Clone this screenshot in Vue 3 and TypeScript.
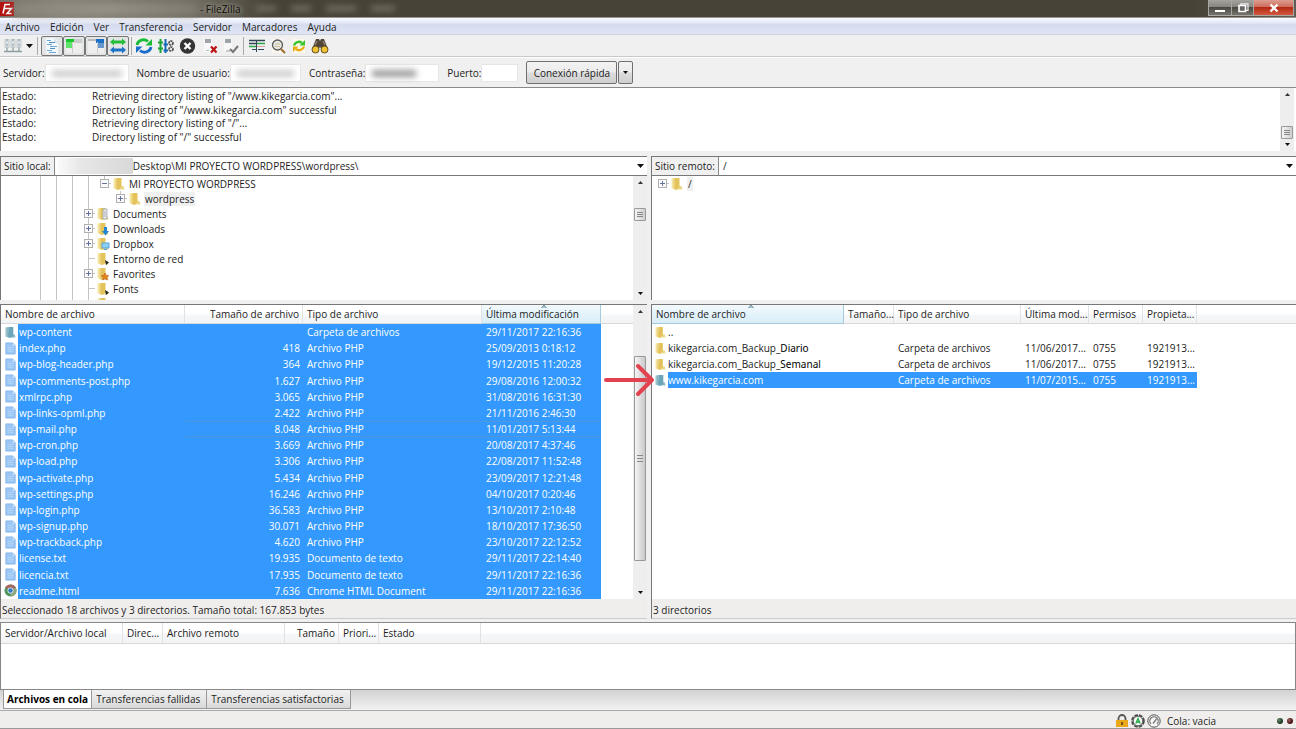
<script setup lang="ts">
import { ref } from 'vue'

type TreeCell = 'line' | 'gap' | 'plus' | 'minus' | 'branch'
interface TreeNode { label: string; cells: TreeCell[]; badge?: string; current?: boolean }
interface LocalFile { name: string; size: string; type: string; date: string; icon: string }

const menus = ['Archivo', 'Edición', 'Ver', 'Transferencia', 'Servidor', 'Marcadores', 'Ayuda']

const log = [
  'Retrieving directory listing of "/www.kikegarcia.com"...',
  'Directory listing of "/www.kikegarcia.com" successful',
  'Retrieving directory listing of "/"...',
  'Directory listing of "/" successful',
]

const tree: TreeNode[] = [
  { label: 'MI PROYECTO WORDPRESS', cells: ['line', 'line', 'line', 'line', 'minus'] },
  { label: 'wordpress', cells: ['line', 'line', 'line', 'line', 'gap', 'plus'], current: true },
  { label: 'Documents', cells: ['line', 'line', 'line', 'plus'], badge: 'doc' },
  { label: 'Downloads', cells: ['line', 'line', 'line', 'plus'], badge: 'down' },
  { label: 'Dropbox', cells: ['line', 'line', 'line', 'plus'], badge: 'box' },
  { label: 'Entorno de red', cells: ['line', 'line', 'line', 'branch'], badge: 'link' },
  { label: 'Favorites', cells: ['line', 'line', 'line', 'plus'], badge: 'star' },
  { label: 'Fonts', cells: ['line', 'line', 'line', 'branch'], badge: 'link' },
  { label: '', cells: ['line', 'line', 'line', 'line'] },
]

const php = 'Archivo PHP'
const txt = 'Documento de texto'
const f = (name: string, size: string, type: string, date: string, icon = 'file'): LocalFile => ({ name, size, type, date, icon })
const files: LocalFile[] = [
  f('wp-content', '', 'Carpeta de archivos', '29/11/2017 22:16:36', 'folder'),
  f('index.php', '418', php, '25/09/2013 0:18:12'),
  f('wp-blog-header.php', '364', php, '19/12/2015 11:20:28'),
  f('wp-comments-post.php', '1.627', php, '29/08/2016 12:00:32'),
  f('xmlrpc.php', '3.065', php, '31/08/2016 16:31:30'),
  f('wp-links-opml.php', '2.422', php, '21/11/2016 2:46:30'),
  f('wp-mail.php', '8.048', php, '11/01/2017 5:13:44'),
  f('wp-cron.php', '3.669', php, '20/08/2017 4:37:46'),
  f('wp-load.php', '3.306', php, '22/08/2017 11:52:48'),
  f('wp-activate.php', '5.434', php, '23/09/2017 12:21:48'),
  f('wp-settings.php', '16.246', php, '04/10/2017 0:20:46'),
  f('wp-login.php', '36.583', php, '13/10/2017 2:10:48'),
  f('wp-signup.php', '30.071', php, '18/10/2017 17:36:50'),
  f('wp-trackback.php', '4.620', php, '23/10/2017 22:12:52'),
  f('license.txt', '19.935', txt, '29/11/2017 22:14:40'),
  f('licencia.txt', '17.935', txt, '29/11/2017 22:16:36'),
  f('readme.html', '7.636', 'Chrome HTML Document', '29/11/2017 22:16:36', 'chrome'),
]

const remote = [
  { name: '..', tail: '', type: '', date: '', perm: '', owner: '' },
  { name: 'kikegarcia.com_Backup_', tail: 'Diario', type: 'Carpeta de archivos', date: '11/06/2017...', perm: '0755', owner: '1921913...' },
  { name: 'kikegarcia.com_Backup_', tail: 'Semanal', type: 'Carpeta de archivos', date: '11/06/2017...', perm: '0755', owner: '1921913...' },
  { name: 'www.kikegarcia.com', tail: '', type: 'Carpeta de archivos', date: '11/07/2015...', perm: '0755', owner: '1921913...' },
]
const selected = ref(3)

const tabs = ['Archivos en cola', 'Transferencias fallidas', 'Transferencias satisfactorias']
const activeTab = ref(0)
const localPath = ref('Desktop\\MI PROYECTO WORDPRESS\\wordpress\\')
const remotePath = ref('/')
</script>

<template>
  <svg class="defs" aria-hidden="true">
    <defs>
      <linearGradient id="gold" x1="0" x2="1"><stop offset="0" stop-color="#f9edb0" /><stop offset="1" stop-color="#dcb84a" /></linearGradient>
      <linearGradient id="teal" x1="0" x2="1"><stop offset="0" stop-color="#a9cbd0" /><stop offset="1" stop-color="#5c9db3" /></linearGradient>
    </defs>
    <symbol id="folder" viewBox="0 0 14 14">
      <path d="M5 9h6.500l1 3.500H5z" fill="#ecd88c" />
      <path d="M5 1h4.500v9l-2.500 2.500H4z" fill="#e3c35a" />
      <path d="M1.500 1.500L5 1v9l2 2.500-5.500-1z" fill="url(#gold)" />
    </symbol>
    <symbol id="folder-sel" viewBox="0 0 14 14">
      <path d="M5 9h6.500l1 3.500H5z" fill="#8dbbcb" />
      <path d="M5 1h5v10l-3 1.500H4z" fill="#6ba5ba" />
      <path d="M1.500 1.500L5 1v9l2 2.500-5.500-1z" fill="url(#teal)" />
    </symbol>
    <symbol id="file" viewBox="0 0 14 14">
      <path d="M2 1h7.500L12 3.500V13H2z" fill="#9cc7f5" stroke="#85b5ec" />
      <path d="M9.500 1v3H12z" fill="#d8eafc" />
      <path d="M4 6h6M4 8h6M4 10h6" stroke="#b5d5f7" />
    </symbol>
    <symbol id="chrome" viewBox="0 0 14 14">
      <circle cx="7" cy="7" r="6.500" fill="#51965e" />
      <path d="M7 7L1.400 3.700A6.500 6.500 0 0 1 12.600 3.700z" fill="#a9665f" />
      <path d="M7 7l5.600-3.300A6.500 6.500 0 0 1 7 13.500z" fill="#8fa681" />
      <circle cx="7" cy="7" r="3.200" fill="#e0effa" /><circle cx="7" cy="7" r="2.400" fill="#3479bd" />
    </symbol>
    <symbol id="up" viewBox="0 0 7 4"><path d="M0 4L3.500 0 7 4z" fill="#333" /></symbol>
    <symbol id="down" viewBox="0 0 7 4"><path d="M0 0h7L3.500 4z" fill="#111" /></symbol>
  </svg>

  <div class="window">
    <header class="titlebar">
      <svg class="logo" viewBox="0 0 14 14" aria-hidden="true">
        <rect width="14" height="14" fill="#b3130f" />
        <path d="M3 11.500L5 2.500h5M4 6.500h4M7 6.500h4.500L7 11.500h4.500" fill="none" stroke="#fff" stroke-width="1.500" />
      </svg>
      <span class="title-haze"></span>
      <h1>- FileZilla</h1>
      <span class="ghost g1"></span><span class="ghost g2"></span><span class="ghost g3"></span><span class="ghost g4"></span>
      <div class="win-buttons">
        <button type="button" class="min" aria-label="Minimizar"><svg viewBox="0 0 12 10"><path d="M1 7h10v2H1z" fill="#fff" /></svg></button>
        <button type="button" class="max" aria-label="Restaurar"><svg viewBox="0 0 12 10"><path d="M4 2V.800h7v6.500H9" fill="none" stroke="#eee" stroke-width="1.200" /><path d="M2 2.500h6.500v6H2z" fill="#666" stroke="#fff" stroke-width="1.600" /></svg></button>
        <button type="button" class="close" aria-label="Cerrar"><svg viewBox="0 0 12 10"><path d="M2.500 1.500l7 7m0-7l-7 7" stroke="#fff" stroke-width="2.300" /></svg></button>
      </div>
    </header>

    <nav class="menubar"><button v-for="m in menus" :key="m" type="button">{{ m }}</button></nav>

    <div class="toolbar" role="toolbar">
      <button type="button" class="wide" aria-label="Gestor de sitios">
        <svg width="18" height="16" viewBox="0 0 18 16"><path d="M1 1.500h4v8H1zM7 1.500h4v8H7zM13 1.500h4v8h-4z" fill="#e3e8ea" stroke="#c2c8ca" /><path d="M3 10v4m6-4v4m6-4v4M0 13.500h18" stroke="#8c9da0" stroke-width="1.300" fill="none" /><path d="M3 1.500v2m6-2v2m6-2v2M3 5.500v3m6-3v3m6-3v3" stroke="#7e9aa8" /></svg>
        <svg width="7" height="4"><use href="#down" /></svg>
      </button>
      <i class="sep"></i>
      <button type="button" class="toggle" aria-label="Registro"><svg width="18" height="16" viewBox="0 0 18 16"><path d="M3 0h9l3 3v13H3z" fill="#f2f7fa" /><path d="M4 2.500h4M4 6.500h5M7 8.500h7M4 12.500h5M6 14.500h7" stroke="#69a8d6" /><path d="M6 4.500h6M7 10.500h5" stroke="#4d8fc0" /><path d="M12 1v3h3" fill="none" stroke="#c5d2da" /></svg></button>
      <button type="button" class="toggle" aria-label="Árbol local"><svg width="18" height="16" viewBox="0 0 18 16"><path d="M1 1h16v14H1z" fill="#eee" /><path d="M1 1h8v3H1z" fill="#17c629" /><path d="M1 4h6v6H1z" fill="#5fe46b" /><path d="M9 1h8v3H9z" fill="#c9ccca" /><path d="M7.500 4v11M9 4.500h8" stroke="#ccc" /></svg></button>
      <button type="button" class="toggle" aria-label="Árbol remoto"><svg width="18" height="16" viewBox="0 0 18 16"><path d="M1 1h16v14H1z" fill="#eee" /><path d="M9 1h8v4H9z" fill="#1a70c4" /><path d="M11 5h6v5h-6z" fill="#6597cc" /><path d="M1 1h8v2H1z" fill="#bbb" /><path d="M10.500 4v11" stroke="#ccc" /></svg></button>
      <button type="button" class="toggle" aria-label="Cola"><svg width="18" height="16" viewBox="0 0 18 16"><path d="M1 4l4-3.500v2h8v-2L17 4l-4 3.500v-2H5v2z" fill="#26bd36" /><path d="M1 12l4-3.500v2h8v-2l4 3.500-4 3.500v-2H5v2z" fill="#1c72c4" /></svg></button>
      <i class="sep near"></i>
      <button type="button" aria-label="Actualizar"><svg width="18" height="16" viewBox="0 0 18 16"><path d="M2 7A6.500 6 0 0 1 13 3.500" fill="none" stroke="#18bd38" stroke-width="2.800" /><path d="M17 1v6.500h-6.500z" fill="#18bd38" /><path d="M16 9A6.500 6 0 0 1 5 12.500" fill="none" stroke="#176dca" stroke-width="2.800" /><path d="M1 15V8.500h6.500z" fill="#176dca" /></svg></button>
      <button type="button" aria-label="Procesar cola"><svg width="18" height="16" viewBox="0 0 18 16"><path d="M3.500 1v14M1 4.500h5M1 10.500h5" stroke="#1ba637" stroke-width="2" /><path d="M8.500 1v14M6.500 6.500H11M6.500 12.500H11" stroke="#1769b4" stroke-width="2" /><circle cx="14" cy="5" r="2" fill="none" stroke="#4a4a4a" stroke-width="1.700" stroke-dasharray="2 .6" /><circle cx="14" cy="11" r="2" fill="none" stroke="#4a4a4a" stroke-width="1.700" stroke-dasharray="2 .6" /></svg></button>
      <button type="button" aria-label="Cancelar"><svg width="18" height="16" viewBox="0 0 18 16"><circle cx="8.500" cy="8" r="7.700" fill="#353535" /><path d="M5.500 5l6 6m0-6l-6 6" stroke="#fff" stroke-width="2.400" /></svg></button>
      <button type="button" class="spaced" aria-label="Desconectar"><svg width="18" height="16" viewBox="0 0 18 16"><path d="M3 1h8v13H3z" fill="#f8f8fa" /><path d="M4 2h6M4 4h6" stroke="#81888e" stroke-width="1.300" /><path d="M5 12.500h3" stroke="#a9c9ad" /><path d="M10 8.500l5.500 6m0-6l-5.500 6" stroke="#bd1010" stroke-width="2.200" /></svg></button>
      <button type="button" class="spaced" aria-label="Reconectar"><svg width="18" height="16" viewBox="0 0 18 16"><path d="M2 1h8v13H2z" fill="#f8f8fa" /><path d="M3 2h6M3 4h6" stroke="#81888e" stroke-width="1.300" /><path d="M4 13h4" stroke="#999" /><path d="M8 11l3 3 5-6" fill="none" stroke="#777" stroke-width="2" /></svg></button>
      <i class="sep mid"></i>
      <button type="button" class="spaced" aria-label="Filtros"><svg width="18" height="16" viewBox="0 0 18 16"><path d="M1 1h16v13H1z" fill="#eef1f1" /><path d="M1 2.500h16M1 5.500h7" stroke="#345" stroke-width="1.300" /><path d="M9 5.500h8M1 8.500h7" stroke="#2ba948" stroke-width="1.600" /><path d="M9 8.500h8" stroke="#d99" /><path d="M4 11.500h4m2 0h6M8.500 3v11" stroke="#345" /></svg></button>
      <button type="button" class="spaced" aria-label="Comparar"><svg width="18" height="16" viewBox="0 0 18 16"><path d="M3 1h11v14H3z" fill="#f9f7ef" /><circle cx="8.500" cy="7" r="5" fill="#e4e7e6" stroke="#5a5a56" stroke-width="1.300" /><path d="M6 6h5M6 8.500h5" stroke="#d2c096" /><path d="M12 11l4 4" stroke="#a16c28" stroke-width="2" /></svg></button>
      <button type="button" class="spaced" aria-label="Sincronizar"><svg width="18" height="16" viewBox="0 0 18 16"><path d="M3 1h12v14H3z" fill="#fcf8e9" /><path d="M4 7.500A5 5 0 0 1 12 5" fill="none" stroke="#39c32c" stroke-width="2.400" /><path d="M15 2v5.500H9.500z" fill="#39c32c" /><path d="M14 8.500A5 5 0 0 1 6 11" fill="none" stroke="#e7ac12" stroke-width="2.400" /><path d="M3 14V8.500h5.500z" fill="#e7ac12" /></svg></button>
      <button type="button" class="spaced" aria-label="Buscar"><svg width="18" height="16" viewBox="0 0 18 16"><path d="M5 1h3l1 2 1-2h3l4 10-5 2-3-4-3 4-5-2z" fill="#524636" /><circle cx="4.500" cy="11.500" r="3.500" fill="#f2c331" stroke="#5e4b28" /><circle cx="13.500" cy="11.500" r="3.500" fill="#f2c331" stroke="#5e4b28" /><path d="M6 3L4 7m8-4l2 4" stroke="#a99b83" /></svg></button>
    </div>

    <form class="quick" @submit.prevent>
      <label for="host">Servidor:</label><span class="field host"><input id="host" type="text"><i class="smudge"></i></span>
      <label for="user">Nombre de usuario:</label><span class="field user"><input id="user" type="text"><i class="smudge"></i></span>
      <label for="pass">Contraseña:</label><span class="field pass"><input id="pass" type="password"><i class="smudge"></i></span>
      <label for="port">Puerto:</label><span class="field port"><input id="port" type="text"></span>
      <button type="submit" class="connect">Conexión rápida</button>
      <button type="button" class="history" aria-label="Historial"><svg width="5" height="3" viewBox="0 0 7 4"><use href="#down" /></svg></button>
    </form>

    <section class="log" aria-label="Registro">
      <dl><template v-for="line in log" :key="line"><dt>Estado:</dt><dd>{{ line }}</dd></template></dl>
      <div class="scroll end"><svg class="arr"><use href="#up" /></svg><i class="before"></i><i class="thumb small"></i><i class="after"></i><svg class="arr"><use href="#down" /></svg></div>
    </section>

    <main class="panes">
      <section class="pane local">
        <div class="site">
          <label for="local-path">Sitio local:</label>
          <i class="site-smudge"></i>
          <input id="local-path" v-model="localPath" type="text">
          <button type="button" aria-label="Rutas locales"><svg width="7" height="4"><use href="#down" /></svg></button>
        </div>
        <div class="tree-box">
          <ul class="tree">
            <li v-for="n in tree" :key="n.label">
              <svg v-for="(c, i) in n.cells" :key="i" class="cell" viewBox="0 0 16 15">
                <path v-if="c !== 'gap' && c !== 'minus' && !(n.current && c === 'plus')" d="M8.500 0v15" stroke="#c3c3c3" />
                <path v-if="c === 'minus' || (n.current && c === 'plus')" d="M8.500 0v5" stroke="#c3c3c3" />
                <path v-if="c === 'plus' || c === 'minus' || c === 'branch'" d="M8 7.500h7" stroke="#c3c3c3" />
                <template v-if="c === 'plus' || c === 'minus'">
                  <rect x="4.500" y="3.500" width="8" height="8" fill="#fafafa" stroke="#b0b0b0" />
                  <path d="M6 7.500h5" stroke="#6273a0" />
                  <path v-if="c === 'plus'" d="M8.500 5v5" stroke="#6273a0" />
                </template>
              </svg>
              <svg class="ficon" viewBox="0 0 14 14">
                <use href="#folder" width="14" height="14" />
                <path v-if="n.badge === 'doc'" d="M7 2h4v10H7z M8 5h2M8 7h2M8 9h2" fill="#e8eaed" stroke="#9ba1aa" stroke-width=".8" />
                <path v-if="n.badge === 'down'" d="M8 5h3v4h2l-3.500 4.500L6 9h2z" fill="#2387cf" />
                <path v-if="n.badge === 'box'" d="M6 6h7v5H6zM8 12.500h3" fill="#8dd0f2" stroke="#54a4d8" />
                <path v-if="n.badge === 'link'" d="M9 8l4 2.500L10 13z" fill="#222" />
                <path v-if="n.badge === 'star'" d="M9 6l1.200 2.300 2.600.4-1.900 1.800.5 2.500L9 11.800 6.700 13l.5-2.500-1.900-1.800 2.600-.4z" fill="#e48a1c" stroke="#b65c15" stroke-width=".6" />
              </svg>
              <span v-if="n.label" :class="{ current: n.current }">{{ n.label }}</span>
            </li>
          </ul>
          <div class="scroll"><svg class="arr"><use href="#up" /></svg><i class="before"></i><i class="thumb small"></i><i class="after"></i><svg class="arr"><use href="#down" /></svg></div>
        </div>
        <div class="list-box">
          <div class="table-wrap">
            <table class="files stretch">
              <colgroup><col class="l-name"><col class="l-size"><col class="l-type"><col class="l-date"><col></colgroup>
              <thead><tr><th>Nombre de archivo</th><th class="num">Tamaño de archivo</th><th>Tipo de archivo</th><th class="sorted">Última modificación<svg class="sort" viewBox="0 0 7 4"><path d="M0 4L3.500 0 7 4" fill="#a9c7d6" stroke="#577889" /></svg></th><th></th></tr></thead>
              <tbody>
                <tr v-for="file in files" :key="file.name" :class="{ focus: file.name === 'wp-mail.php' }">
                  <td class="first"><span class="name"><svg class="icon"><use :href="file.icon === 'folder' ? '#folder-sel' : '#' + file.icon" /></svg><b>{{ file.name }}</b></span></td>
                  <td class="sel num">{{ file.size }}</td><td class="sel">{{ file.type }}</td><td class="sel">{{ file.date }}</td><td></td>
                </tr>
              </tbody>
            </table>
          </div>
          <div class="scroll"><svg class="arr"><use href="#up" /></svg><i class="before list-before"></i><i class="thumb big"></i><i class="after list-after"></i><svg class="arr"><use href="#down" /></svg></div>
        </div>
        <p class="summary">Seleccionado 18 archivos y 3 directorios. Tamaño total: 167.853 bytes</p>
      </section>

      <section class="pane remote">
        <div class="site">
          <label for="remote-path">Sitio remoto:</label>
          <input id="remote-path" v-model="remotePath" class="slash" type="text">
          <button type="button" aria-label="Rutas remotas"><svg width="7" height="4"><use href="#down" /></svg></button>
        </div>
        <div class="tree-box">
          <ul class="tree root">
            <li>
              <svg class="cell" viewBox="0 0 16 15"><path d="M8 7.500h7" stroke="#c3c3c3" /><rect x="4.500" y="3.500" width="8" height="8" fill="#fafafa" stroke="#b0b0b0" /><path d="M6 7.500h5M8.500 5v5" stroke="#6273a0" /></svg>
              <svg class="ficon" viewBox="0 0 14 14"><use href="#folder" width="14" height="14" /></svg>
              <span class="current">/</span>
            </li>
          </ul>
        </div>
        <div class="list-box">
          <div class="table-wrap">
            <table class="files">
              <colgroup><col class="r-name"><col class="r-size"><col class="r-type"><col class="r-date"><col class="r-perm"><col class="r-own"><col></colgroup>
              <thead><tr><th class="sorted">Nombre de archivo<svg class="sort" viewBox="0 0 7 4"><path d="M0 4L3.500 0 7 4" fill="#a9c7d6" stroke="#577889" /></svg></th><th>Tamaño...</th><th>Tipo de archivo</th><th>Última mod...</th><th>Permisos</th><th>Propieta...</th><th></th></tr></thead>
              <tbody>
                <tr v-for="(r, i) in remote" :key="i" :class="{ picked: i === selected }" @click="selected = i">
                  <td class="first"><span class="name"><svg class="icon"><use :href="i === selected ? '#folder-sel' : '#folder'" /></svg><b>{{ r.name }}<em v-if="r.tail">{{ r.tail }}</em></b></span></td>
                  <td></td><td>{{ r.type }}</td><td>{{ r.date }}</td><td>{{ r.perm }}</td><td>{{ r.owner }}</td><td></td>
                </tr>
              </tbody>
            </table>
          </div>
          <svg class="pointer" viewBox="0 0 52 34" aria-hidden="true"><path d="M2 17h46M34 3l14 14-14 14" fill="none" stroke="#e2414f" stroke-width="4" stroke-linecap="round" stroke-linejoin="round" /></svg>
        </div>
        <p class="summary">3 directorios</p>
      </section>
    </main>

    <section class="queue">
      <table class="files">
        <colgroup><col class="q-local"><col class="q-dir"><col class="q-remote"><col class="q-size"><col class="q-prio"><col class="q-state"><col></colgroup>
        <thead><tr><th>Servidor/Archivo local</th><th>Direc...</th><th>Archivo remoto</th><th class="num">Tamaño</th><th>Priori...</th><th>Estado</th><th></th></tr></thead>
      </table>
    </section>

    <div class="tabs" role="tablist">
      <button v-for="(t, i) in tabs" :key="t" type="button" role="tab" :aria-selected="i === activeTab" :class="{ active: i === activeTab }" @click="activeTab = i">{{ t }}</button>
    </div>

    <footer class="status">
      <svg width="14" height="14" viewBox="0 0 14 14"><path d="M3.500 7V4.500a3.500 3.500 0 0 1 7 0V7" fill="none" stroke="#555" stroke-width="1.800" /><path d="M1 6h12v7H1z" fill="#eaa91b" /><path d="M7 8v3" stroke="#5a4210" stroke-width="1.600" /></svg>
      <svg width="14" height="14" viewBox="0 0 14 14"><circle cx="7" cy="7" r="5.800" fill="none" stroke="#4b4b4b" stroke-width="2" stroke-dasharray="3.600 1" /><circle cx="7" cy="7" r="4.800" fill="#f4f9f4" stroke="#555" /><path d="M4.800 9.500L7 4.500l2.200 5M5.800 8h2.400" fill="none" stroke="#20a944" stroke-width="1.300" /></svg>
      <svg width="14" height="14" viewBox="0 0 14 14"><circle cx="7" cy="7" r="6.200" fill="#f5f5f5" stroke="#555" /><path d="M4 10a4.200 4.200 0 1 1 6 0M6 9.500L9.500 5" fill="none" stroke="#777" stroke-width="1.300" /></svg>
      <span class="queue-state">Cola: vacia</span>
      <span class="leds"><i class="green"></i><i class="red"></i></span>
    </footer>
  </div>
</template>

<style>
body { margin: 0; }
</style>

<style scoped>
* { box-sizing: border-box; }
.defs { position: absolute; width: 0; height: 0; }
.window { display: flex; flex-direction: column; height: 100vh; background: #f0f0f0; color: #1c1c1c; font: 10px/14px "Open Sans", "Noto Sans", sans-serif; overflow: hidden; }
button, input { font: inherit; color: inherit; border: 0; padding: 0; margin: 0; background: none; border-radius: 0; min-width: 0; }
svg { display: block; flex: none; }

.titlebar { display: flex; align-items: center; flex: none; height: 18px; background: linear-gradient(90deg, #777269, #858177 60px, #6e695e 200px, #484337 270px, #484337 92%, #615d54); border-bottom: 1px solid #969591; }
.logo { width: 14px; height: 14px; }
.title-haze { width: 184px; height: 12px; background: linear-gradient(90deg, #8b867b, #99948a, #827d73); filter: blur(4px); }
h1 { margin: 0 0 0 2px; font: inherit; color: #0c0b09; text-shadow: 0 0 4px #b5b0a5, 0 0 6px #aaa59b; }
.ghost { height: 5px; margin-left: 15px; background: #777266; filter: blur(3px); }
.g1 { width: 20px; } .g2 { width: 20px; } .g3 { width: 30px; } .g4 { width: 24px; }
.win-buttons { display: flex; margin-left: auto; align-self: flex-start; height: 16px; padding-right: 2px; }
.win-buttons button { width: 24px; display: grid; place-items: center; border: 1px solid #aaa8a2; border-top: 0; background: linear-gradient(#a5a39e, #88857f 45%, #4a4842 50%, #77746c); }
.win-buttons .max { width: 22px; border-left: 0; }
.win-buttons .close { width: 40px; border-left: 0; background: linear-gradient(#dc9d90, #cf6d5d 45%, #b52a15 50%, #d4583f); }
.win-buttons svg { width: 12px; height: 10px; }

.menubar { display: flex; flex: none; gap: 10px; height: 17px; padding-left: 5px; background: linear-gradient(#f8faff, #e4e9f7 30%, #d5dcee 40%, #dfe5f5); border-bottom: 1px solid #cfd3de; }
.menubar button { line-height: 18px; }

.toolbar { display: flex; flex: none; align-items: center; height: 22px; padding-left: 4px; border-bottom: 1px solid #c9c9c9; background: #f0f0f0; }
.toolbar button { display: flex; align-items: center; justify-content: center; width: 22px; height: 20px; }
.toolbar .wide { width: 30px; gap: 4px; justify-content: flex-start; }
.toolbar .spaced { width: 21px; }
.toolbar .toggle { border: 1px solid #777; border-radius: 2px; background: #e2e4e6; }
.sep { width: 1px; height: 18px; margin: 0 3px; background: #aaa; flex: none; }
.sep.near { margin: 0 1px 0 2px; }
.sep.mid { margin: 0 2px; }

.quick { display: flex; flex: none; align-items: center; height: 30px; padding-left: 3px; border-top: 1px solid #fff; }
.quick label { flex: none; }
.field { position: relative; display: block; height: 18px; margin-right: 8px; flex: none; background: #fff; border: 1px solid #e6e6e6; }
.field input { display: block; width: 100%; height: 100%; }
.host { width: 84px; } .user { width: 71px; } .pass { width: 74px; } .port { width: 37px; }
.smudge { position: absolute; left: 6px; right: 6px; top: 5px; height: 7px; background: #ccc; filter: blur(3px); pointer-events: none; }
.pass .smudge { right: 22px; background: #999; }
.connect, .history { height: 23px; border: 1px solid #707070; border-radius: 2px; background: linear-gradient(#f3f3f3, #ebebeb 48%, #dcdcdc 52%, #cfcfcf); flex: none; }
.connect { width: 91px; }
.history { width: 15px; margin-left: 1px; display: grid; place-items: center; }

.log { display: flex; flex: none; height: 64px; margin-bottom: 5px; background: #fff; border-top: 1px solid #8a8a8a; border-left: 1px solid #8a8a8a; }
dl { display: grid; flex: 1; grid-template-columns: 90px 1fr; grid-template-rows: repeat(4, 1fr); height: 54px; margin: 2px 0 0; padding-left: 1px; line-height: 13px; }
dd { margin: 0; }

.scroll { display: flex; flex-direction: column; align-items: center; width: 14px; flex: none; padding: 5px 0; background: #eeeeee; }
.log .scroll { margin-right: 2px; }
.arr { width: 5px; height: 3px; }
.before { flex: 25; } .after { flex: 74; }
.end .before { flex: 74; } .end .after { flex: 11; }
.thumb { width: 12px; flex: none; border: 1px solid #999; border-radius: 1px; background: linear-gradient(#888, #888) center 3px / 6px 1px no-repeat, linear-gradient(#888, #888) center 5px / 6px 1px no-repeat, linear-gradient(#888, #888) center 7px / 6px 1px no-repeat, linear-gradient(90deg, #f5f5f5, #cfcfcf); }
.small { height: 13px; }
.thumb.big { flex: 205; background: linear-gradient(#888, #888) center 98px / 6px 1px no-repeat, linear-gradient(#888, #888) center 101px / 6px 1px no-repeat, linear-gradient(#888, #888) center 104px / 6px 1px no-repeat, linear-gradient(90deg, #f5f5f5, #c9c9c9); }
.list-before { flex: 43; } .list-after { flex: 30; }

.panes { display: grid; flex: 1; min-height: 0; grid-template-columns: 647fr 645fr; gap: 4px; }
.pane { display: flex; flex-direction: column; min-width: 0; min-height: 0; }
.site { display: flex; flex: none; height: 20px; align-items: center; border: 1px solid #777; border-width: 1px 0 1px 1px; background: #fff; }
.site label { align-self: stretch; padding: 0 3px; line-height: 18px; background: #f0f0f0; border-right: 1px solid #888; }
.site-smudge { width: 75px; height: 16px; margin-left: 3px; background: linear-gradient(90deg, #fafafa, #e7e7e7 30%, #d8d8d8); flex: none; }
.site input { flex: 1; height: 18px; }
.site .slash { padding-left: 4px; }
.site button { width: 14px; height: 18px; display: grid; place-items: center; }
.tree-box { display: flex; flex: none; height: 124px; overflow: hidden; border-left: 1px solid #777; background: #fff; }
.tree { flex: 1; list-style: none; margin: 0; padding: 0 0 0 31px; }
.tree.root { padding-left: 2px; }
.tree.root .ficon { margin-right: 3px; }
.tree li { display: flex; align-items: center; height: 15px; white-space: nowrap; }
.cell { width: 16px; height: 15px; }
.ficon { width: 14px; height: 14px; margin-right: 2px; }
.tree span { padding: 0 1px; }
.tree .current { background: #f0f0f0; }

.list-box { position: relative; display: flex; flex: 1; min-height: 0; margin-top: 4px; border-top: 1px solid #777; border-left: 1px solid #777; background: #fff; }
.table-wrap { flex: 1; min-width: 0; height: 100%; overflow: hidden; }
.files { width: 100%; table-layout: fixed; border-collapse: separate; border-spacing: 0; }
.stretch { height: 100%; }
th, td { padding: 0 3px 0 4px; text-align: left; font-weight: 400; white-space: nowrap; line-height: 16px; }
th { position: relative; height: 18px; background: linear-gradient(#fff, #fff 50%, #f6f7f8 55%, #f2f3f4); border-right: 1px solid #e0e2e4; border-bottom: 1px solid #d8d8d8; line-height: 18px; }
th:last-child { border-right: 0; }
.sorted { background: linear-gradient(#f4fafd, #e4f3fb 50%, #d9edf7); border-color: #a5cbdc; }
.sort { position: absolute; top: 0; left: 50%; width: 6px; height: 3px; }
.num { text-align: right; }
.l-name { width: 184px; } .l-size { width: 118px; } .l-type { width: 179px; } .l-date { width: 119px; }
.r-name { width: 192px; } .r-size { width: 50px; } .r-type { width: 127px; } .r-date { width: 68px; } .r-perm { width: 54px; } .r-own { width: 54px; }
.first { padding: 0; }
.stretch td { line-height: 14px; }
.name { display: flex; align-items: center; }
.icon { width: 13px; height: 13px; margin-left: 2px; }
.stretch .icon { margin-left: 3px; }
.name b { font-weight: 400; padding-left: 1px; }
.name em { font-style: normal; font-family: "Noto Sans", sans-serif; color: #000; }
.sel { background: #3399ff; color: #fff; }
.stretch .first { background: linear-gradient(90deg, #fff 17px, #3399ff 17px); color: #fff; }
.stretch .name b { padding-left: 2px; }
.focus .sel { box-shadow: inset 0 -1px #4f96dc, inset 0 1px #4f96dc; }
.picked td:not(:last-child) { background: #3399ff; color: #fff; }
.picked td.first { background: linear-gradient(90deg, #fff 16px, #3399ff 16px); }
.pointer { position: absolute; left: -48px; top: 58px; width: 52px; height: 34px; }
.summary { flex: none; height: 20px; margin: 0; padding-left: 1px; line-height: 22px; border-left: 1px solid #777; background: #f0eeed; border-bottom: 1px solid #ccc; }

.queue { flex: none; height: 68px; margin-top: 3px; background: #fff; border: 1px solid #888; }
.queue th { line-height: 20px; }
.q-local { width: 122px; } .q-dir { width: 40px; } .q-remote { width: 122px; } .q-size { width: 54px; } .q-prio { width: 40px; } .q-state { width: 102px; }

.tabs { display: flex; flex: none; height: 21px; padding-left: 3px; background: linear-gradient(#d2d2d2, #f2f2f2); border-bottom: 1px solid #aaa; }
.tabs button { height: 19px; padding: 0 6px 0 4px; border: 1px solid #999; border-width: 0 1px 1px 0; background: linear-gradient(#f1f1f1, #e7e7e7 50%, #d8d8d8); }
.tabs .active { padding: 0 3px; border-left-width: 1px; background: #fff; font-weight: 700; color: #000; }

.status { display: flex; flex: none; align-items: center; justify-content: flex-end; gap: 2px; height: 18px; padding-top: 2px; background: #f0eeec; border-bottom: 1px solid #999; }
.queue-state { width: 112px; padding-left: 4px; }
.leds { display: flex; gap: 4px; padding-right: 3px; }
.leds i { width: 6px; height: 6px; border-radius: 50%; }
.green { background: radial-gradient(circle at 35% 35%, #6c8a6c, #1c3a22 60%); }
.red { background: radial-gradient(circle at 35% 35%, #9a6060, #4a1414 60%); }
</style>
